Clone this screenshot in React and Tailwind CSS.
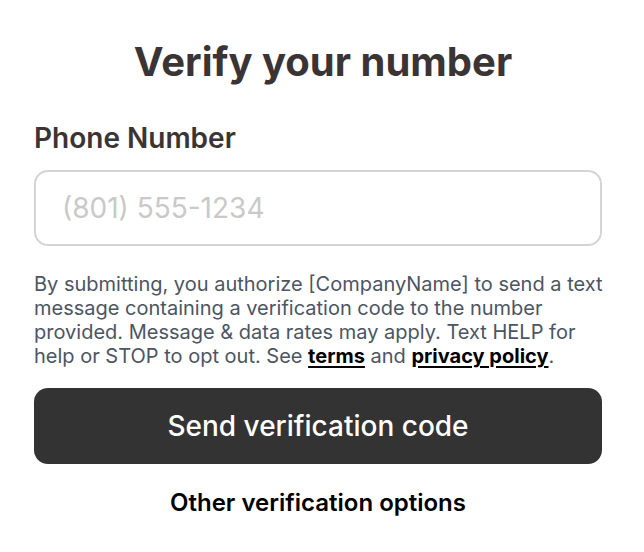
export default function App() {
  return (
    <div className="w-[644px] h-[552px] bg-white pt-[38px]" style={{ fontFamily: "Inter, 'Noto Sans', sans-serif" }}>
      <h1 className="pl-[2px] text-center text-[40px] leading-[48px] font-bold text-[#3b3435]">
        Verify your number
      </h1>
      <div className="pl-[34px] pr-[42px]">
        <label className="block mt-[35px] text-[28px] leading-[34px] font-semibold text-[#3b3435]">
          Phone Number
        </label>
        <input
          type="tel"
          placeholder="(801) 555-1234"
          className="mt-[15px] block w-full h-[76px] rounded-[14px] border-2 border-[#d4d4d4] px-[26px] text-[28px] outline-none placeholder:text-[#c9c9c9]"
        />
        <p className="mt-[26px] w-[580px] text-[20px] leading-[24px] text-[#4b5563]">
          By submitting, you authorize [CompanyName] to send a text message containing a verification code to the number
          provided. Message &amp; data rates may apply. Text HELP for help or STOP to opt out. See{" "}
          <a className="font-bold text-black underline decoration-[1.5px] underline-offset-[3px]">terms</a> and{" "}
          <a className="font-bold text-black underline decoration-[1.5px] underline-offset-[3px]">privacy policy</a>.
        </p>
        <button className="mt-[20px] flex w-full h-[76px] items-center justify-center rounded-[14px] bg-[#333333] text-[28px] font-medium text-white">
          Send verification code
        </button>
        <div className="mt-[24px] text-center text-[24px] leading-[30px] font-semibold text-black">
          Other verification options
        </div>
      </div>
    </div>
  );
}
